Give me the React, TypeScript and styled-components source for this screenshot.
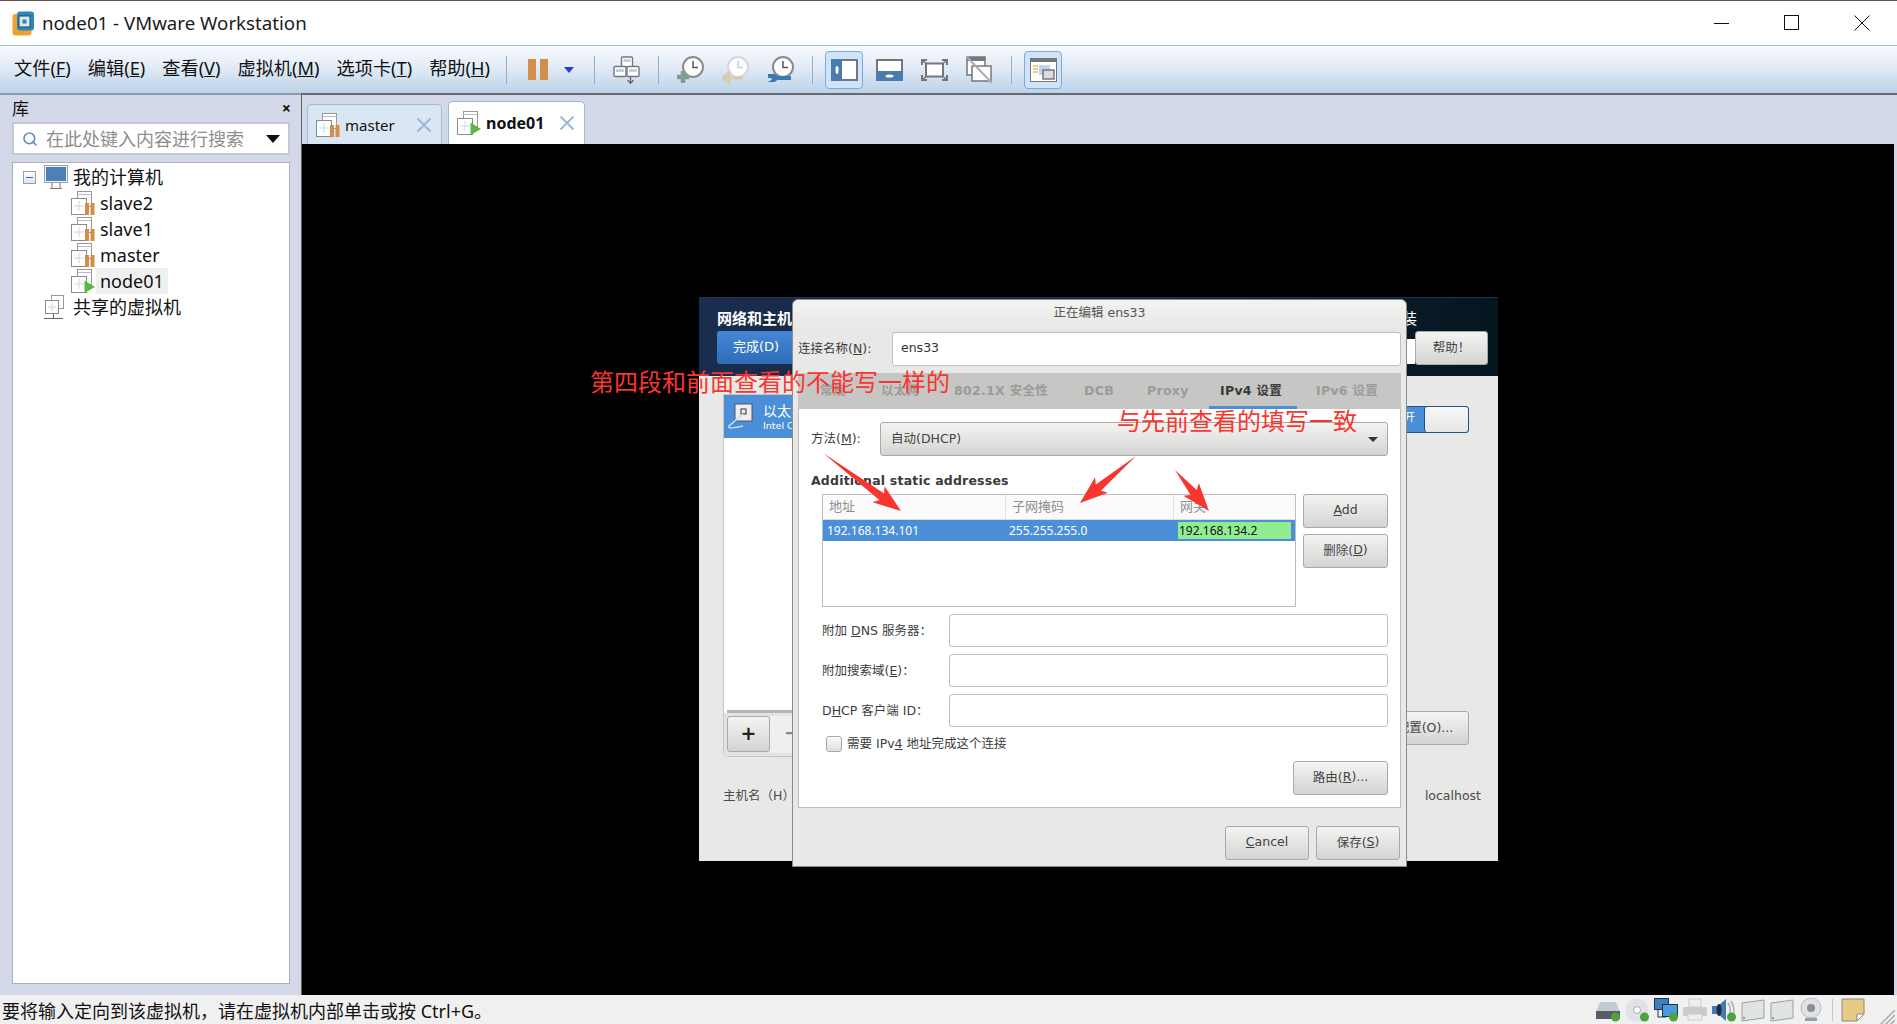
import React, { FunctionComponent } from 'react';
import styled, { createGlobalStyle } from 'styled-components';
import { Search } from 'lucide-react';

const UI_FONT = '"Noto Sans", "Noto Sans CJK SC", sans-serif';
const GTK_FONT = '"DejaVu Sans", "Noto Sans CJK SC", sans-serif';

const GlobalStyle = createGlobalStyle`
  html, body { margin: 0; padding: 0; height: 100%; overflow: hidden; }
  body { font-family: ${UI_FONT}; background: #d4d9ea; }
  * { box-sizing: border-box; }
`;

const Window = styled.div`
  width: 1897px;
  height: 1024px;
  display: flex;
  flex-direction: column;
  border-top: 1px solid #5a5050;
  background: #d4d9ea;
  overflow: hidden;
`;

/* title bar */
const TitleBar = styled.div`
  height: 44px;
  background: #fff;
  display: flex;
  align-items: center;
  padding-left: 12px;
  flex: none;
`;
const TitleText = styled.div`
  margin-left: 7px;
  padding-bottom: 2px;
  font-size: 18.7px;
  color: #1b1b1b;
  flex: 1;
  white-space: nowrap;
`;
const WinButton = styled.div`
  width: 70px;
  height: 44px;
  display: flex;
  align-items: center;
  justify-content: center;
`;

/* menu + toolbar */
const MenuBar = styled.div`
  height: 50px;
  flex: none;
  display: flex;
  align-items: center;
  background: linear-gradient(#f9fbff, #dfe9f5 50%, #bcd2e9);
  border-top: 1px solid #9dbcd9;
  border-bottom: 2px solid #8d9aa8;
`;
const MenuList = styled.div`
  width: 506px;
  padding: 0 0 4px 14px;
  display: flex;
  gap: 17px;
`;
const MenuItem = styled.span`
  font-size: 18.2px;
  color: #111;
  white-space: nowrap;
  line-height: 26px;
`;
const Sep = styled.div`
  width: 1px;
  height: 28px;
  background: #8fb0cf;
  flex: none;
`;
const PauseGroup = styled.div`
  display: flex;
  align-items: center;
  gap: 16px;
  padding: 0 20px 0 21px;
`;
const ToolGroup = styled.div`
  display: flex;
  gap: 7px;
  padding: 0 13px 0 12px;
`;
const ToolButton = styled.div<{ $active?: boolean }>`
  width: 38px;
  height: 38px;
  display: flex;
  align-items: center;
  justify-content: center;
  border-radius: 4px;
  border: 1px solid ${p => (p.$active ? '#7fa9d8' : 'transparent')};
  background: ${p => (p.$active ? '#cfe3f9' : 'transparent')};
`;
const DownCaret = styled.div`
  width: 0;
  height: 0;
  border-left: 5px solid transparent;
  border-right: 5px solid transparent;
  border-top: 6px solid #1f3fd0;
`;

/* body */
const Body = styled.div`
  flex: 1;
  display: flex;
  min-height: 0;
`;
const Sidebar = styled.div`
  width: 296px;
  flex: none;
  padding: 0 6px 11px 12px;
  display: flex;
  flex-direction: column;
`;
const SidebarHead = styled.div`
  height: 27px;
  display: flex;
  align-items: center;
  justify-content: space-between;
  font-size: 17px;
  color: #111;
  padding-bottom: 2px;
`;
const SidebarClose = styled.span`
  font-size: 16px;
  font-weight: 700;
  line-height: 16px;
  margin-right: -1px;
`;
const SearchBox = styled.div`
  height: 33px;
  background: #fff;
  border: 2px solid #c6c9d0;
  display: flex;
  align-items: center;
  padding: 0 8px 0 8px;
  color: #8d8d8d;
  font-size: 18px;
`;
const SearchText = styled.span`
  flex: 1;
  margin-left: 8px;
  padding-bottom: 2px;
  white-space: nowrap;
`;
const SearchCaret = styled.div`
  width: 0;
  height: 0;
  border-left: 7px solid transparent;
  border-right: 7px solid transparent;
  border-top: 8px solid #111;
`;
const TreePanel = styled.div`
  flex: 1;
  margin-top: 7px;
  background: #fff;
  border: 1px solid #a9afc0;
  padding-top: 1px;
`;
const TreeRow = styled.div<{ $indent: number }>`
  height: 26px;
  display: flex;
  align-items: center;
  padding-left: ${p => p.$indent}px;
`;
const TreeLabel = styled.span<{ $selected?: boolean }>`
  font-size: 18px;
  line-height: 26px;
  color: #111;
  padding: 0 4px 0 4px;
  margin-left: 1px;
  background: ${p => (p.$selected ? '#f0f0f0' : 'transparent')};
  white-space: nowrap;
`;
const Expander = styled.div`
  width: 13px;
  height: 13px;
  border: 1px solid #9aa0a8;
  background: linear-gradient(#fff, #dfe3ea);
  display: flex;
  align-items: center;
  justify-content: center;
  margin-right: 8px;
  &::after {
    content: '';
    width: 7px;
    height: 1px;
    background: #3b5f9b;
  }
`;

const Main = styled.div`
  flex: 1;
  min-width: 0;
  margin-left: 5px;
  border-left: 1px solid #5d6068;
  border-top: 2px solid #666a70;
  display: flex;
  flex-direction: column;
  padding-right: 3px;
  margin-top: -2px;
`;
const TabStrip = styled.div`
  height: 49px;
  flex: none;
  display: flex;
  align-items: flex-end;
  gap: 6px;
  padding-left: 5px;
`;
const Tab = styled.div<{ $active?: boolean }>`
  height: ${p => (p.$active ? 43 : 40)}px;
  width: ${p => (p.$active ? 137 : 135)}px;
  display: flex;
  align-items: center;
  padding: 0 9px 0 8px;
  border-radius: 5px 5px 0 0;
  border: 1px solid #9dbad6;
  border-bottom: none;
  background: ${p => (p.$active ? '#fff' : '#dbe6f4')};
`;
const TabLabel = styled.span<{ $active?: boolean }>`
  flex: 1;
  margin-left: 5px;
  font-size: ${p => (p.$active ? 16 : 15)}px;
  font-weight: ${p => (p.$active ? 700 : 400)};
  color: #111;
`;
const VmScreen = styled.div`
  position: relative;
  flex: 1;
  background: #000;
  padding: 153px 0 0 397px;
`;

/* installer shown in the VM */
const Installer = styled.div`
  position: relative;
  width: 799px;
  height: 564px;
  background: #e8e8e7;
  font-family: ${GTK_FONT};
  display: flex;
  flex-direction: column;
`;
const InstallerHead = styled.div`
  height: 79px;
  flex: none;
  background: linear-gradient(90deg, #1b2d4e, #0f2238 60%, #06161f);
  border-top: 1px solid #21344f;
  padding: 12px 10px 0 18px;
  display: flex;
  flex-direction: column;
`;
const InstallerTitleRow = styled.div`
  display: flex;
  justify-content: space-between;
  height: 21px;
  color: #fff;
  font-size: 15px;
  line-height: 19px;
  padding-right: 71px;
  white-space: nowrap;
`;
const InstallerTitle = styled.span`
  font-weight: 700;
`;
const InstallerButtons = styled.div`
  display: flex;
  justify-content: space-between;
`;
const DoneButton = styled.div`
  width: 100px;
  height: 33px;
  background: linear-gradient(#4587d6, #2e6cb8);
  border-radius: 3px;
  color: #fff;
  font-size: 13px;
  padding-left: 16px;
  line-height: 31px;
`;
const HeadTools = styled.div`
  display: flex;
`;
const KeyField = styled.div`
  width: 30px;
  height: 25px;
  margin-top: 8px;
  background: #fff;
`;
const GtkButton = styled.div<{ $w: number; $h?: number }>`
  width: ${p => p.$w}px;
  height: ${p => p.$h ?? 34}px;
  display: flex;
  align-items: center;
  justify-content: center;
  flex: none;
  padding-bottom: 3px;
  background: linear-gradient(#f4f4f3, #d4d4d2);
  border: 1px solid #a9a9a7;
  border-radius: 3px;
  color: #444;
  font-size: 12.5px;
  white-space: nowrap;
`;
const InstallerBody = styled.div`
  flex: 1;
  display: flex;
  flex-direction: column;
  padding: 18px 29px 0 24px;
`;
const InstallerColumns = styled.div`
  height: 363px;
  display: flex;
  justify-content: space-between;
`;
const NetList = styled.div`
  width: 400px;
  display: flex;
  flex-direction: column;
  background: #fff;
  border: 1px solid #c4c4c2;
  border-radius: 0 0 5px 5px;
`;
const NetRow = styled.div`
  height: 43px;
  background: #4a8fd8;
  color: #fff;
  display: flex;
  align-items: center;
  padding-left: 3px;
`;
const NetRowText = styled.div`
  margin-left: 10px;
  font-size: 14px;
  line-height: 18px;
  white-space: nowrap;
`;
const NetRowSub = styled.div`
  font-size: 9.5px;
  line-height: 12px;
`;
const NetSpacer = styled.div`
  flex: 1;
  border-bottom: 3px solid #b5b5b3;
  margin: 0 0 0 3px;
`;
const NetToolbar = styled.div`
  height: 43px;
  background: #e3e3e2;
  padding: 3px 3px;
  display: flex;
  border-radius: 0 0 5px 5px;
`;
const NetPlus = styled(GtkButton)`
  font-size: 19px;
  color: #222;
  font-weight: 700;
`;
const NetMinus = styled.div`
  flex: 1;
  background: #efefef;
  color: #888;
  font-size: 19px;
  font-weight: 700;
  line-height: 32px;
  padding-left: 14px;
`;
const RightColumn = styled.div`
  display: flex;
  flex-direction: column;
  align-items: flex-end;
  justify-content: space-between;
  padding: 12px 0 12px;
`;
const Switch = styled.div`
  width: 100px;
  height: 27px;
  background: #4a8fd8;
  border: 1px solid #21508a;
  border-radius: 3px;
  display: flex;
  justify-content: flex-end;
  align-items: stretch;
  color: #fff;
  font-size: 11px;
  line-height: 22px;
`;
const SwitchText = styled.span`
  margin-right: 9px;
`;
const SwitchKnob = styled.div`
  width: 44px;
  background: linear-gradient(#f8f8f7, #e6e6e5);
  border-left: 1px solid #21508a;
  border-radius: 3px;
`;
const ConfigButton = styled(GtkButton)`
  padding-left: 12px;
`;
const HostRow = styled.div`
  display: flex;
  justify-content: space-between;
  margin: 30px -12px 0 0;
  color: #4a4a4a;
  font-size: 12.5px;
  line-height: 18px;
  white-space: pre;
`;

/* editing dialog */
const Dialog = styled.div`
  position: absolute;
  left: 93px;
  top: 2px;
  width: 615px;
  height: 568px;
  background: #e8e8e7;
  border: 1px solid #8c8c8a;
  border-radius: 6px 6px 0 0;
  padding: 0 5px;
  display: flex;
  flex-direction: column;
  color: #3d3d3d;
  font-size: 12.5px;
`;
const DialogTitle = styled.div`
  height: 32px;
  margin: 0 -5px;
  flex: none;
  text-align: center;
  line-height: 26px;
  color: #555;
  background: linear-gradient(#f3f3f2, #e6e6e5);
  border-radius: 6px 6px 0 0;
`;
const FieldLabel = styled.span`
  padding-bottom: 3px;
`;
const ConnRow = styled.div`
  height: 34px;
  flex: none;
  display: flex;
  align-items: center;
  justify-content: space-between;
`;
const GtkInput = styled.div<{ $w: number }>`
  width: ${p => p.$w}px;
  height: 100%;
  background: #fff;
  border: 1px solid #c0c0be;
  border-radius: 3px;
  padding: 0 0 3px 8px;
  display: flex;
  align-items: center;
  color: #333;
`;
const TabPanel = styled.div`
  margin-top: 7px;
  height: 435px;
  flex: none;
  border: 1px solid #bdbdbb;
  display: flex;
  flex-direction: column;
  background: #fff;
`;
const TabHeader = styled.div`
  height: 36px;
  flex: none;
  background: #c6c6c4;
  position: relative;
  margin: -1px -1px 0;
`;
const TabTitle = styled.span<{ $left: number; $active?: boolean }>`
  position: absolute;
  left: ${p => p.$left}px;
  top: 0;
  height: 36px;
  line-height: 35px;
  font-size: 12.5px;
  font-weight: 700;
  letter-spacing: 0.3px;
  white-space: nowrap;
  color: ${p => (p.$active ? '#3a3a3a' : '#9b9b99')};
`;
const TabUnderline = styled.div`
  position: absolute;
  left: 411px;
  right: 104px;
  bottom: 0;
  height: 3px;
  background: #4a8fd8;
`;
const TabContent = styled.div`
  flex: 1;
  padding: 13px 12px 0 12px;
  display: flex;
  flex-direction: column;
`;
const MethodRow = styled.div`
  height: 34px;
  display: flex;
  align-items: center;
  justify-content: space-between;
  flex: none;
`;
const Combo = styled(GtkButton)`
  justify-content: space-between;
  padding: 0 9px 4px 10px;
`;
const ComboCaret = styled.div`
  width: 0;
  height: 0;
  margin-top: 4px;
  border-left: 5px solid transparent;
  border-right: 5px solid transparent;
  border-top: 5px solid #333;
`;
const SectionTitle = styled.div`
  margin-top: 16px;
  height: 17px;
  line-height: 17px;
  font-weight: 700;
  font-size: 12.5px;
  letter-spacing: 0.2px;
  color: #3a3a3a;
  flex: none;
`;
const AddressBlock = styled.div`
  margin-top: 5px;
  padding-left: 11px;
  height: 113px;
  flex: none;
  display: flex;
  justify-content: space-between;
`;
const AddressTable = styled.div`
  width: 474px;
  border: 1px solid #bdbdbb;
  background: #fff;
  font-family: ${UI_FONT};
  font-size: 12px;
`;
const TableHead = styled.div`
  height: 25px;
  display: grid;
  grid-template-columns: 182px 168px 1fr;
  border-bottom: 1px solid #dcdcda;
  color: #8f8f8d;
  background: #fbfbfb;
`;
const HeadCell = styled.div`
  padding-left: 6px;
  line-height: 23px;
  border-left: 1px solid #e2e2e0;
  font-size: 13px;
  &:first-child { border-left: none; }
`;
const TableRow = styled.div`
  height: 21px;
  display: grid;
  grid-template-columns: 182px 168px 1fr;
  background: #4a8fd8;
  color: #fff;
  align-items: center;
`;
const RowCell = styled.div`
  padding: 0 0 0 4px;
`;
const EditCell = styled.div`
  margin: 0 4px 0 5px;
  height: 17px;
  line-height: 17px;
  background: #90ee90;
  color: #111;
  padding-left: 1px;
`;
const AddressActions = styled.div`
  display: flex;
  flex-direction: column;
  gap: 6px;
`;
const FieldList = styled.div`
  margin-top: 7px;
  padding-left: 11px;
  display: flex;
  flex-direction: column;
  gap: 7px;
`;
const FieldRow = styled.div`
  height: 33px;
  display: flex;
  align-items: center;
  justify-content: space-between;
`;
const CheckRow = styled.div`
  margin-top: 9px;
  padding-left: 15px;
  height: 16px;
  display: flex;
  align-items: center;
  gap: 5px;
`;
const CheckBox = styled.div`
  width: 16px;
  height: 16px;
  border: 1px solid #a5a5a3;
  border-radius: 3px;
  background: linear-gradient(#fbfbfb, #dededc);
`;
const RouteRow = styled.div`
  margin-top: 9px;
  display: flex;
  justify-content: flex-end;
`;
const DialogActions = styled.div`
  margin-top: 18px;
  display: flex;
  justify-content: flex-end;
  gap: 7px;
  padding-right: 1px;
`;

/* screenshot annotations */
const Note = styled.div<{ $x: number; $y: number }>`
  position: absolute;
  left: ${p => p.$x}px;
  top: ${p => p.$y}px;
  font-family: "Noto Sans CJK SC", sans-serif;
  font-size: 24px;
  line-height: 30px;
  color: #f9352f;
  white-space: nowrap;
`;
const ArrowLayer = styled.svg`
  position: absolute;
  left: 0;
  top: 0;
  pointer-events: none;
`;

/* status bar */
const StatusBar = styled.div`
  height: 29px;
  flex: none;
  background: #f0f0f0;
  display: flex;
  align-items: center;
  padding: 0 2px 0 2px;
  font-size: 18px;
  color: #111;
`;
const StatusText = styled.div`
  flex: 1;
  white-space: nowrap;
`;
const StatusIcons = styled.div`
  display: flex;
  align-items: center;
  gap: 5px;
`;
const StatusSep = styled.div`
  width: 1px;
  height: 22px;
  background: #c8c8c8;
  margin: 0 3px 0 4px;
`;
const GripBox = styled.div`
  margin: 10px 0 0 9px;
  height: 16px;
`;

/* icons */
const AppIcon = () => (
  <svg width="23" height="25" viewBox="0 0 23 25">
    <rect x="0.5" y="3" width="19" height="21.500" rx="3" fill="#f0a030" />
    <rect x="5" y="0.5" width="17" height="19" rx="3" fill="#2f86b8" />
    <rect x="7" y="5" width="11" height="11" fill="#d8e8ee" stroke="#1b4e70" />
    <rect x="10.500" y="8.500" width="4" height="4" fill="#2f86b8" />
  </svg>
);

const VmIcon: FunctionComponent<{ status?: 'pause' | 'play' | 'none' }> = ({ status = 'none' }) => (
  <svg width="24" height="24" viewBox="0 0 24 24">
    <rect x="6.5" y="0.5" width="14" height="15" fill="#fff" stroke="#999" />
    <path d="M6.500 3.500h14" stroke="#bbb" />
    <rect x="0.5" y="7.5" width="15" height="16" fill="#fff" stroke="#8a8a8a" />
    <path d="M8 10v10M3 15h10" stroke="#c9d6ea" fill="none" />
    {status === 'pause' && (
      <>
        <rect x="14" y="12" width="4" height="12" fill="#d08f47" />
        <rect x="19.5" y="12" width="4" height="12" fill="#d08f47" />
      </>
    )}
    {status === 'play' && <path d="M13.5 11.5L24 18L13.5 24Z" fill="#5cb840" />}
  </svg>
);

const MonitorIcon = () => (
  <svg width="24" height="24" viewBox="0 0 24 24">
    <rect x="0.5" y="0.5" width="23" height="17" fill="#eef1f5" stroke="#9aa0a8" />
    <rect x="2" y="2" width="20" height="14" fill="#4d7fb8" />
    <path d="M6 23.5h12M8 18v5M16 18v5" stroke="#777" fill="none" />
  </svg>
);

const SharedIcon = () => (
  <svg width="24" height="25" viewBox="0 0 24 25">
    <rect x="7.5" y="0.5" width="12" height="13" fill="#fff" stroke="#999" />
    <rect x="1.5" y="5.5" width="13" height="13" fill="#fff" stroke="#8a8a8a" />
    <path d="M8 8v8M4 12h8" stroke="#c9d6ea" fill="none" />
    <path d="M9.5 18v5M0 23.5h19" stroke="#666" fill="none" />
  </svg>
);

const NetworkToolIcon = () => (
  <svg width="27" height="28" viewBox="0 0 27 28">
    <rect x="8.5" y="1" width="11" height="10" rx="1" fill="#fff" stroke="#777" strokeWidth="1.4" />
    <rect x="10.5" y="3" width="7" height="3" fill="#bcd0ea" />
    <rect x="1" y="10.5" width="12" height="10" rx="1" fill="#fff" stroke="#777" strokeWidth="1.4" />
    <rect x="3" y="13" width="8" height="3" fill="#bcd0ea" />
    <rect x="14" y="10.5" width="12" height="10" rx="1" fill="#fff" stroke="#777" strokeWidth="1.4" />
    <rect x="16" y="13" width="8" height="3" fill="#bcd0ea" />
    <path d="M17.5 21v6M14.5 24l3 3.4 3-3.4" stroke="#666" strokeWidth="1.3" fill="none" />
  </svg>
);

const ClockIcon: FunctionComponent<{ kind: 'add' | 'revert' | 'manage' }> = ({ kind }) => {
  const faded = kind === 'revert';
  const ring = faded ? '#d4d8dd' : '#8a8a8a';
  return (
    <svg width="27" height="28" viewBox="0 0 27 28">
      <circle cx="16" cy="11" r="10" fill="#fff" stroke={ring} strokeWidth="2" />
      <path d="M16 5v6.5h5" stroke={faded ? '#c8ccd2' : '#555'} strokeWidth="1.5" fill="none" />
      {kind === 'add' && <path d="M0 21h12M6 15v12" stroke="#7fa08e" strokeWidth="4.5" fill="none" />}
      {kind === 'revert' && <path d="M21 22H6M0 22l7-5v10z" stroke="#d8cbb8" fill="#d8cbb8" strokeWidth="3" />}
      {kind === 'manage' && (
        <path d="M1 18h6c2 0 2 2 4 2h13v4H11c-2 0-2 2-4 2H1l4-2.500-1-1.500H1z" fill="#3b78b4" />
      )}
    </svg>
  );
};

const SidebarViewIcon = () => (
  <svg width="27" height="22" viewBox="0 0 27 22">
    <rect x="0" y="0" width="27" height="22" fill="#4a7cb0" />
    <rect x="11" y="2" width="14" height="18" fill="#fff" />
    <rect x="25" y="0" width="2" height="22" fill="#777" />
    <rect x="11" y="0" width="16" height="2" fill="#777" />
    <rect x="11" y="20" width="16" height="2" fill="#777" />
    <ellipse cx="6" cy="11" rx="1.500" ry="4" fill="#fff" />
  </svg>
);

const BottomViewIcon = () => (
  <svg width="27" height="22" viewBox="0 0 27 22">
    <rect x="0" y="0" width="27" height="22" fill="#4a7cb0" />
    <rect x="0" y="0" width="27" height="12" fill="#777" />
    <rect x="2" y="2" width="23" height="10" fill="#fff" />
    <ellipse cx="13.500" cy="17" rx="4" ry="1.500" fill="#fff" />
  </svg>
);

const FullScreenIcon = () => (
  <svg width="27" height="22" viewBox="0 0 27 22">
    <rect x="5" y="4.500" width="17" height="13" fill="#fff" stroke="#777" strokeWidth="2" />
    <path d="M1 6V1h5M21 1h5v5M26 16v5h-5M6 21H1v-5" stroke="#777" strokeWidth="2" fill="none" />
    <path d="M1 1l4 3.500M26 1l-4 3.500M26 21l-4-3.500M1 21l4-3.500" stroke="#777" strokeWidth="1.500" />
  </svg>
);

const NoGuestIcon = () => (
  <svg width="27" height="28" viewBox="0 0 27 28">
    <rect x="1" y="1" width="18" height="18" fill="#fff" stroke="#777" strokeWidth="1.500" />
    <rect x="1" y="1" width="18" height="4" fill="#777" />
    <rect x="6" y="10" width="19" height="15" fill="#fff" stroke="#777" strokeWidth="1.500" />
    <path d="M1 1l25 26" stroke="#a8aeb6" strokeWidth="2" />
  </svg>
);

const ConsoleViewIcon = () => (
  <svg width="27" height="24" viewBox="0 0 27 24">
    <rect x="0.500" y="0.500" width="26" height="23" fill="#fff" stroke="#777" />
    <rect x="0" y="0" width="27" height="4" fill="#777" />
    <path d="M3 8h5M3 11h5M3 14h5" stroke="#e2b95f" strokeWidth="1.500" />
    <rect x="9" y="7" width="11" height="10" fill="#c3d3ec" />
    <rect x="13" y="12" width="11" height="9" fill="#d7dde6" stroke="#777" strokeWidth="1.500" />
  </svg>
);

const ClosePane = () => (
  <svg width="16" height="16" viewBox="0 0 16 16">
    <path d="M1.500 1.500l13 13M14.500 1.500l-13 13" stroke="#9ab7d3" strokeWidth="1.800" />
  </svg>
);

const ActivityDot = () => <circle cx="19.500" cy="19" r="4.500" fill="#4ea33a" />;

const StatusHdd = () => (
  <svg width="24" height="24" viewBox="0 0 24 24">
    <path d="M4 4h16l4 10H0z" fill="#c5c9d0" />
    <rect x="0" y="13" width="24" height="8" fill="#555d68" />
    <ActivityDot />
  </svg>
);
const StatusCd = () => (
  <svg width="24" height="24" viewBox="0 0 24 24">
    <circle cx="12" cy="12" r="11.500" fill="#dfe2e6" />
    <circle cx="12" cy="12" r="3.500" fill="#fff" stroke="#aaa" />
    <ActivityDot />
  </svg>
);
const StatusNet = () => (
  <svg width="24" height="24" viewBox="0 0 24 24">
    <rect x="0.500" y="0.500" width="14" height="11" fill="#3f7fc0" stroke="#234" />
    <rect x="8.500" y="6.500" width="15" height="12" fill="#4a9ae0" stroke="#234" />
    <path d="M4 12v7h8" stroke="#234" fill="none" />
    <ActivityDot />
  </svg>
);
const StatusPrinter = () => (
  <svg width="24" height="24" viewBox="0 0 24 24">
    <rect x="6" y="1" width="12" height="8" fill="#eee" stroke="#ccc" />
    <rect x="0" y="9" width="24" height="9" rx="2" fill="#c9cbd0" />
    <rect x="5" y="16" width="14" height="6" fill="#eee" stroke="#ccc" />
  </svg>
);
const StatusSpeaker = () => (
  <svg width="24" height="24" viewBox="0 0 24 24">
    <path d="M0 8h6l8-7v22l-8-7H0z" fill="#4479b8" />
    <ellipse cx="7" cy="12" rx="2.500" ry="6" fill="#1c2a3a" />
    <path d="M16 5c3 4 3 10 0 14M19 3c4 6 4 12 0 18" stroke="#9fb0c6" strokeWidth="1.500" fill="none" />
    <ActivityDot />
  </svg>
);
const StatusUsb = () => (
  <svg width="24" height="24" viewBox="0 0 24 24">
    <path d="M1 5l22-3v18L1 23z" fill="#dfe3e3" stroke="#9aa0a0" />
    <rect x="2" y="19" width="2" height="2" fill="#7cb060" />
  </svg>
);
const StatusCam = () => (
  <svg width="24" height="24" viewBox="0 0 24 24">
    <circle cx="12" cy="10" r="10" fill="#dfe2e6" stroke="#b5b8bd" />
    <circle cx="12" cy="10" r="4" fill="#8a8f96" />
    <rect x="6" y="20" width="12" height="3" fill="#9a9ea4" />
  </svg>
);
const StatusNote = () => (
  <svg width="24" height="24" viewBox="0 0 24 24">
    <path d="M1 1h22v15l-7 7H1z" fill="#e7cb85" stroke="#8a8a7a" />
    <path d="M16 23v-7h7z" fill="#fff" stroke="#8a8a7a" />
  </svg>
);
const Grip = () => (
  <svg width="16" height="16" viewBox="0 0 16 16">
    <path d="M0 16L16 0M5 16L16 5M10 16l6-6" stroke="#aaa" strokeWidth="1.500" />
  </svg>
);

/* draws a hand-annotated arrow: thin tail, thick body, barbed head */
const arrowPoints = (x1: number, y1: number, x2: number, y2: number) => {
  const len = Math.hypot(x2 - x1, y2 - y1);
  const ux = (x2 - x1) / len;
  const uy = (y2 - y1) / len;
  const nx = -uy;
  const ny = ux;
  const at = (d: number, w: number) => `${x1 + ux * d + nx * w},${y1 + uy * d + ny * w}`;
  return [at(0, 0), at(len - 24, 4), at(len - 28, 10), at(len, 0), at(len - 28, -10), at(len - 24, -4)].join(' ');
};

const ARROWS = [
  [521, 309, 599, 367],
  [834, 312, 778, 359],
  [873, 326, 907, 367],
];

const TREE = [
  { name: 'slave2', status: 'pause' as const },
  { name: 'slave1', status: 'pause' as const },
  { name: 'master', status: 'pause' as const },
  { name: 'node01', status: 'play' as const, selected: true },
];

const MENUS: [string, string][] = [
  ['文件', 'F'],
  ['编辑', 'E'],
  ['查看', 'V'],
  ['虚拟机', 'M'],
  ['选项卡', 'T'],
  ['帮助', 'H'],
];

const NM_TABS = [
  { title: '常规', left: 27 },
  { title: '以太网', left: 88 },
  { title: '802.1X 安全性', left: 161 },
  { title: 'DCB', left: 291 },
  { title: 'Proxy', left: 354 },
  { title: 'IPv4 设置', left: 427, active: true },
  { title: 'IPv6 设置', left: 523 },
];

export default function App() {
  return (
    <>
      <GlobalStyle />
      <Window>
        <TitleBar>
          <AppIcon />
          <TitleText>node01 - VMware Workstation</TitleText>
          <WinButton>
            <svg width="16" height="16"><path d="M0 8.500h15" stroke="#111" /></svg>
          </WinButton>
          <WinButton>
            <svg width="16" height="16"><rect x="0.500" y="0.500" width="14" height="14" fill="none" stroke="#111" /></svg>
          </WinButton>
          <WinButton>
            <svg width="16" height="16"><path d="M0.500 0.500l15 15M15.500 0.500l-15 15" stroke="#111" /></svg>
          </WinButton>
        </TitleBar>

        <MenuBar>
          <MenuList>
            {MENUS.map(([label, key]) => (
              <MenuItem key={key}>
                {label}(<u>{key}</u>)
              </MenuItem>
            ))}
          </MenuList>
          <Sep />
          <PauseGroup>
            <svg width="20" height="21">
              <rect width="8" height="21" fill="#d0904a" />
              <rect x="12" width="8" height="21" fill="#d0904a" />
            </svg>
            <DownCaret />
          </PauseGroup>
          <Sep />
          <ToolGroup>
            <ToolButton><NetworkToolIcon /></ToolButton>
          </ToolGroup>
          <Sep />
          <ToolGroup>
            <ToolButton><ClockIcon kind="add" /></ToolButton>
            <ToolButton><ClockIcon kind="revert" /></ToolButton>
            <ToolButton><ClockIcon kind="manage" /></ToolButton>
          </ToolGroup>
          <Sep />
          <ToolGroup>
            <ToolButton $active><SidebarViewIcon /></ToolButton>
            <ToolButton><BottomViewIcon /></ToolButton>
            <ToolButton><FullScreenIcon /></ToolButton>
            <ToolButton><NoGuestIcon /></ToolButton>
          </ToolGroup>
          <Sep />
          <ToolGroup>
            <ToolButton $active><ConsoleViewIcon /></ToolButton>
          </ToolGroup>
        </MenuBar>

        <Body>
          <Sidebar>
            <SidebarHead>
              <span>库</span>
              <SidebarClose>×</SidebarClose>
            </SidebarHead>
            <SearchBox>
              <Search size={16} color="#6d8fb8" strokeWidth={2.5} />
              <SearchText>在此处键入内容进行搜索</SearchText>
              <SearchCaret />
            </SearchBox>
            <TreePanel>
              <TreeRow $indent={10}>
                <Expander />
                <MonitorIcon />
                <TreeLabel>我的计算机</TreeLabel>
              </TreeRow>
              {TREE.map(vm => (
                <TreeRow key={vm.name} $indent={58}>
                  <VmIcon status={vm.status} />
                  <TreeLabel $selected={vm.selected}>{vm.name}</TreeLabel>
                </TreeRow>
              ))}
              <TreeRow $indent={31}>
                <SharedIcon />
                <TreeLabel>共享的虚拟机</TreeLabel>
              </TreeRow>
            </TreePanel>
          </Sidebar>

          <Main>
            <TabStrip>
              <Tab>
                <VmIcon status="pause" />
                <TabLabel>master</TabLabel>
                <ClosePane />
              </Tab>
              <Tab $active>
                <VmIcon status="play" />
                <TabLabel $active>node01</TabLabel>
                <ClosePane />
              </Tab>
            </TabStrip>
            <VmScreen>
              <Installer>
                <InstallerHead>
                  <InstallerTitleRow>
                    <InstallerTitle>网络和主机名</InstallerTitle>
                    <span>装</span>
                  </InstallerTitleRow>
                  <InstallerButtons>
                    <DoneButton>完成(D)</DoneButton>
                    <HeadTools>
                      <KeyField />
                      <GtkButton $w={73}>帮助！</GtkButton>
                    </HeadTools>
                  </InstallerButtons>
                </InstallerHead>
                <InstallerBody>
                  <InstallerColumns>
                    <NetList>
                      <NetRow>
                        <svg width="26" height="28" viewBox="0 0 26 28">
                          <rect x="8" y="1" width="17" height="17" fill="#eee" stroke="#556" />
                          <rect x="14" y="6" width="5" height="5" fill="none" stroke="#333" />
                          <path d="M16 11L2 23c-2 3 6 2 14 0" stroke="#cde" fill="none" strokeWidth="1.500" />
                        </svg>
                        <NetRowText>
                          以太网 (ens33)
                          <NetRowSub>Intel Corporation</NetRowSub>
                        </NetRowText>
                      </NetRow>
                      <NetSpacer />
                      <NetToolbar>
                        <NetPlus $w={43} $h={36}>+</NetPlus>
                        <NetMinus>−</NetMinus>
                      </NetToolbar>
                    </NetList>
                    <RightColumn>
                      <Switch>
                        <SwitchText>开</SwitchText>
                        <SwitchKnob />
                      </Switch>
                      <ConfigButton $w={100}>配置(O)...</ConfigButton>
                    </RightColumn>
                  </InstallerColumns>
                  <HostRow>
                    <span>主机名（H） ：</span>
                    <span>:     localhost</span>
                  </HostRow>
                </InstallerBody>

                <Dialog>
                  <DialogTitle>正在编辑 ens33</DialogTitle>
                  <ConnRow>
                    <FieldLabel>连接名称(<u>N</u>):</FieldLabel>
                    <GtkInput $w={509}>ens33</GtkInput>
                  </ConnRow>
                  <TabPanel>
                    <TabHeader>
                      {NM_TABS.map(t => (
                        <TabTitle key={t.title} $left={t.left - 5} $active={t.active}>{t.title}</TabTitle>
                      ))}
                      <TabUnderline />
                    </TabHeader>
                    <TabContent>
                      <MethodRow>
                        <FieldLabel>方法(<u>M</u>):</FieldLabel>
                        <Combo $w={508}>
                          <span>自动(DHCP)</span>
                          <ComboCaret />
                        </Combo>
                      </MethodRow>
                      <SectionTitle>Additional static addresses</SectionTitle>
                      <AddressBlock>
                        <AddressTable>
                          <TableHead>
                            <HeadCell>地址</HeadCell>
                            <HeadCell>子网掩码</HeadCell>
                            <HeadCell>网关</HeadCell>
                          </TableHead>
                          <TableRow>
                            <RowCell>192.168.134.101</RowCell>
                            <RowCell>255.255.255.0</RowCell>
                            <EditCell>192.168.134.2</EditCell>
                          </TableRow>
                        </AddressTable>
                        <AddressActions>
                          <GtkButton $w={85}><span><u>A</u>dd</span></GtkButton>
                          <GtkButton $w={85}>删除(<u>D</u>)</GtkButton>
                        </AddressActions>
                      </AddressBlock>
                      <FieldList>
                        <FieldRow>
                          <FieldLabel>附加 <u>D</u>NS 服务器：</FieldLabel>
                          <GtkInput $w={439} />
                        </FieldRow>
                        <FieldRow>
                          <FieldLabel>附加搜索域(<u>E</u>)：</FieldLabel>
                          <GtkInput $w={439} />
                        </FieldRow>
                        <FieldRow>
                          <FieldLabel>D<u>H</u>CP 客户端 ID：</FieldLabel>
                          <GtkInput $w={439} />
                        </FieldRow>
                      </FieldList>
                      <CheckRow>
                        <CheckBox />
                        <FieldLabel>需要 IPv<u>4</u> 地址完成这个连接</FieldLabel>
                      </CheckRow>
                      <RouteRow>
                        <GtkButton $w={95}>路由(<u>R</u>)...</GtkButton>
                      </RouteRow>
                    </TabContent>
                  </TabPanel>
                  <DialogActions>
                    <GtkButton $w={84}><span><u>C</u>ancel</span></GtkButton>
                    <GtkButton $w={84}>保存(<u>S</u>)</GtkButton>
                  </DialogActions>
                </Dialog>
              </Installer>

              <ArrowLayer width="1592" height="851">
                {ARROWS.map(a => (
                  <polygon key={a[0]} points={arrowPoints(a[0], a[1], a[2], a[3])} fill="#f9352f" />
                ))}
              </ArrowLayer>
              <Note $x={288} $y={222}>第四段和前面查看的不能写一样的</Note>
              <Note $x={815} $y={261}>与先前查看的填写一致</Note>
            </VmScreen>
          </Main>
        </Body>

        <StatusBar>
          <StatusText>要将输入定向到该虚拟机，请在虚拟机内部单击或按 Ctrl+G。</StatusText>
          <StatusIcons>
            <StatusHdd />
            <StatusCd />
            <StatusNet />
            <StatusPrinter />
            <StatusSpeaker />
            <StatusUsb />
            <StatusUsb />
            <StatusCam />
            <StatusSep />
            <StatusNote />
            <GripBox><Grip /></GripBox>
          </StatusIcons>
        </StatusBar>
      </Window>
    </>
  );
}
